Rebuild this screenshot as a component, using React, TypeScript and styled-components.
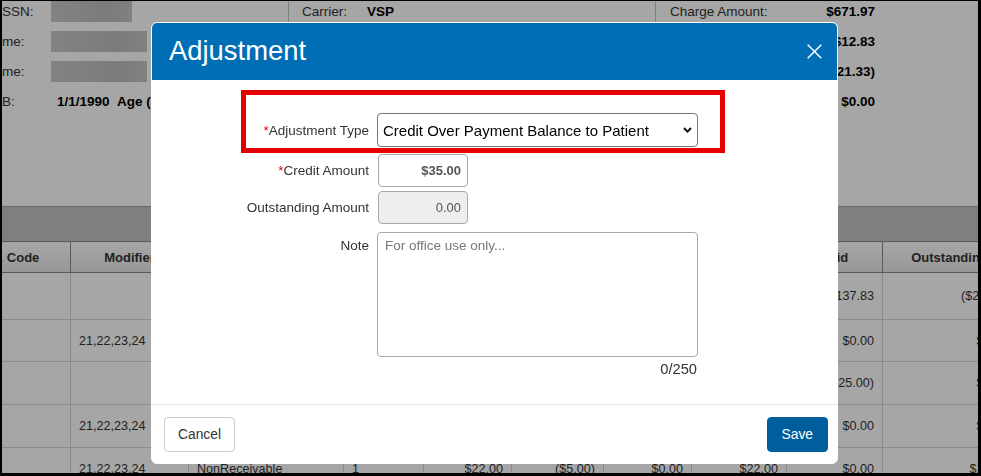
import React from "react";
import styled, { createGlobalStyle } from "styled-components";

const GlobalStyle = createGlobalStyle`
  html, body {
    margin: 0;
    padding: 0;
  }
  body {
    font-family: "Liberation Sans", Arial, sans-serif;
    font-size: 13.5px;
    color: #333;
    background: #000;
    overflow: hidden;
  }
  * {
    box-sizing: border-box;
  }
`;

const Frame = styled.div`
  width: 981px;
  height: 476px;
  border: solid #000;
  border-width: 1px 3px 3px 2px;
  background: #fff;
  overflow: hidden;
`;

/* ---------- page behind the dialog ---------- */

const InfoGrid = styled.div`
  display: grid;
  grid-template-columns: 286px 367px 220px;
  margin-top: -5px;
`;

const InfoCol = styled.div<{ $cols: string; $divider?: boolean; $pad?: number }>`
  display: grid;
  grid-template-columns: ${(p) => p.$cols};
  grid-auto-rows: 30px;
  align-items: center;
  padding-left: ${(p) => p.$pad ?? 0}px;
  border-left: ${(p) => (p.$divider ? "1px solid #c4c4c4" : "none")};
`;

const InfoLabel = styled.span`
  color: #333;
  white-space: nowrap;
`;

const InfoValue = styled.span<{ $right?: boolean }>`
  font-weight: bold;
  color: #000;
  white-space: nowrap;
  text-align: ${(p) => (p.$right ? "right" : "left")};
  padding-left: ${(p) => (p.$right ? 0 : 6)}px;
`;

const Redacted = styled.span<{ $w: number }>`
  display: block;
  width: ${(p) => p.$w}px;
  height: 21px;
  background: linear-gradient(90deg, #c9c9c9 0%, #c2c2c2 45%, #bdbdbd 70%, #c6c6c6 100%);
`;

const Band = styled.div`
  margin-top: 90px;
  height: 35px;
  border-top: 1px solid #a3a3a3;
  background: #c4c4c4;
`;

const Table = styled.table`
  margin-left: -63px;
  border-collapse: collapse;
  table-layout: fixed;
  width: 1077px;
  font-size: 12.6px;
`;

const Th = styled.th`
  height: 31px;
  padding: 0 6px;
  border: 1px solid #8a8a8a;
  background: linear-gradient(#ffffff, #e9e9e9);
  font-size: 13px;
  font-weight: bold;
  color: #333;
  text-align: center;
  white-space: nowrap;
  overflow: hidden;
`;

const Tr = styled.tr<{ $h: number }>`
  height: ${(p) => p.$h}px;
`;

const Td = styled.td<{ $right?: boolean }>`
  padding: 0 8px;
  border: 1px solid #d6d6d6;
  color: #333;
  text-align: ${(p) => (p.$right ? "right" : "left")};
  white-space: nowrap;
  overflow: hidden;
`;

/* ---------- dialog ---------- */

const Backdrop = styled.div`
  position: fixed;
  inset: 0;
  background: rgba(0, 0, 0, 0.35);
  display: flex;
  align-items: flex-start;
  padding: 22px 0 0 151px;
`;

const Modal = styled.div`
  width: 687px;
  background: #fff;
  border: 1px solid #fff;
  border-radius: 6px;
  overflow: hidden;
`;

const Header = styled.div`
  height: 57px;
  background: #006eb4;
  display: flex;
  align-items: center;
  justify-content: space-between;
  padding: 0 15px 0 17px;
`;

const Title = styled.h4`
  margin: 0 0 2px;
  font-size: 27.4px;
  font-weight: normal;
  color: #fff;
`;

const CloseButton = styled.button`
  display: flex;
  padding: 0;
  border: none;
  background: transparent;
  cursor: pointer;
  margin-top: -1px;
`;

const Body = styled.div`
  padding: 33px 0 27px;
`;

const FormRow = styled.div<{ $top?: number; $alignTop?: boolean }>`
  position: relative;
  display: grid;
  grid-template-columns: 217px 1fr;
  column-gap: 8px;
  align-items: ${(p) => (p.$alignTop ? "start" : "center")};
  margin-top: ${(p) => p.$top ?? 0}px;
`;

const Highlight = styled.span`
  position: absolute;
  top: -23px;
  bottom: -6px;
  left: 89px;
  width: 484px;
  border: 5px solid #e60000;
  pointer-events: none;
`;

const Label = styled.label<{ $padTop?: number }>`
  text-align: right;
  color: #333;
  padding-top: ${(p) => p.$padTop ?? 0}px;
`;

const Required = styled.span`
  color: #e00000;
`;

const SelectWrap = styled.div`
  position: relative;
  width: 321px;
  height: 34px;
`;

const Select = styled.select`
  appearance: none;
  width: 100%;
  height: 100%;
  padding: 0 28px 0 5px;
  border: 1px solid #767676;
  border-radius: 4px;
  background: #fff;
  font-family: inherit;
  font-size: 15px;
  color: #000;
`;

const Chevron = styled.svg`
  position: absolute;
  right: 6px;
  top: 14px;
  pointer-events: none;
`;

const AmountInput = styled.input<{ $bold?: boolean }>`
  width: 90px;
  height: 33px;
  margin-left: 1px;
  padding: 0 6px;
  border: 1px solid #a9a9a9;
  border-radius: 4px;
  background: ${(p) => (p.readOnly ? "#eeeeee" : "#fff")};
  font-family: inherit;
  font-size: 13px;
  font-weight: ${(p) => (p.$bold ? "bold" : "normal")};
  color: #555;
  text-align: right;
`;

const NoteArea = styled.textarea`
  display: block;
  width: 321px;
  height: 125px;
  padding: 5px 7px;
  border: 1px solid #a9a9a9;
  border-radius: 4px;
  resize: none;
  font-family: inherit;
  font-size: 13.5px;
  color: #333;

  &::placeholder {
    color: #777;
  }
`;

const Counter = styled.div`
  grid-column: 2;
  width: 320px;
  margin-top: 4px;
  text-align: right;
  font-size: 14.7px;
  line-height: 16px;
  color: #333;
`;

const Footer = styled.div`
  display: flex;
  justify-content: space-between;
  padding: 12px 9px 11px 12px;
  border-top: 1px solid #e5e5e5;
`;

const Button = styled.button<{ $primary?: boolean }>`
  height: 35px;
  padding: 0 ${(p) => (p.$primary ? 14 : 13)}px;
  border: 1px solid ${(p) => (p.$primary ? "#005e9c" : "#cccccc")};
  border-radius: 4px;
  background: ${(p) => (p.$primary ? "#005e9c" : "#fff")};
  color: ${(p) => (p.$primary ? "#fff" : "#333")};
  font-family: inherit;
  font-size: 13.8px;
  cursor: pointer;
`;

const columns = [131, 118, 155, 80, 88, 92, 88, 95, 96, 134];
const headers = ["Proc. Code", "Modifier", "Type", "Units", "Charge", "Adjustment", "Write Off", "Allowed", "Paid", "Outstanding"];

type Line = { h: number; cells: string[] };

const lines: Line[] = [
  { h: 47, cells: ["", "", "Exam", "1", "$150.00", "$0.00", "$0.00", "$150.00", "$137.83", "($21.33)"] },
  { h: 42, cells: ["", "21,22,23,24", "Frame", "1", "$95.00", "$0.00", "$0.00", "$95.00", "$0.00", "$0.00"] },
  { h: 43, cells: ["", "", "Lens", "1", "$60.00", "$0.00", "$0.00", "$60.00", "($25.00)", "$0.00"] },
  { h: 43, cells: ["", "21,22,23,24", "Coating", "1", "$40.00", "$0.00", "$0.00", "$40.00", "$0.00", "$0.00"] },
  { h: 42, cells: ["", "21,22,23,24", "NonReceivable", "1", "$22.00", "($5.00)", "$0.00", "$22.00", "$0.00", "$17.00"] },
];

const leftAligned = [0, 1, 2, 3];

const BackgroundPage = () => (
  <>
    <InfoGrid>
      <InfoCol $cols="49px 1fr">
        <InfoLabel>SSN:</InfoLabel>
        <Redacted $w={81} />
        <InfoLabel>me:</InfoLabel>
        <Redacted $w={96} />
        <InfoLabel>me:</InfoLabel>
        <Redacted $w={96} />
        <InfoLabel>B:</InfoLabel>
        <InfoValue>1/1/1990&nbsp;&nbsp;Age (35)</InfoValue>
      </InfoCol>
      <InfoCol $cols="59px 1fr" $divider $pad={13}>
        <InfoLabel>Carrier:</InfoLabel>
        <InfoValue>VSP</InfoValue>
        <InfoLabel>Plan:</InfoLabel>
        <InfoValue>Choice</InfoValue>
        <InfoLabel>Group:</InfoLabel>
        <InfoValue>12345</InfoValue>
        <InfoLabel>Auth:</InfoLabel>
        <InfoValue>A-0091</InfoValue>
      </InfoCol>
      <InfoCol $cols="140px 65px" $divider $pad={14}>
        <InfoLabel>Charge Amount:</InfoLabel>
        <InfoValue $right>$671.97</InfoValue>
        <InfoLabel>Paid Amount:</InfoLabel>
        <InfoValue $right>$12.83</InfoValue>
        <InfoLabel>Adjustment:</InfoLabel>
        <InfoValue $right>($21.33)</InfoValue>
        <InfoLabel>Balance:</InfoLabel>
        <InfoValue $right>$0.00</InfoValue>
      </InfoCol>
    </InfoGrid>
    <Band />
    <Table>
      <colgroup>
        {columns.map((w, i) => (
          <col key={i} style={{ width: w }} />
        ))}
      </colgroup>
      <thead>
        <tr>
          {headers.map((h) => (
            <Th key={h}>{h}</Th>
          ))}
        </tr>
      </thead>
      <tbody>
        {lines.map((line, r) => (
          <Tr key={r} $h={line.h}>
            {line.cells.map((c, i) => (
              <Td key={i} $right={!leftAligned.includes(i)}>
                {c}
              </Td>
            ))}
          </Tr>
        ))}
      </tbody>
    </Table>
  </>
);

const AdjustmentDialog = () => (
  <Backdrop>
    <Modal>
      <Header>
        <Title>Adjustment</Title>
        <CloseButton aria-label="Close">
          <svg width="15" height="15" viewBox="0 0 15 15">
            <path d="M0.7 0.7 L14.3 14.3 M14.3 0.7 L0.7 14.3" stroke="#fff" strokeWidth="1.5" fill="none" />
          </svg>
        </CloseButton>
      </Header>
      <Body>
        <FormRow>
          <Highlight />
          <Label>
            <Required>*</Required>Adjustment Type
          </Label>
          <SelectWrap>
            <Select defaultValue="credit">
              <option value="credit">Credit Over Payment Balance to Patient</option>
              <option value="debit">Debit Balance to Patient</option>
            </Select>
            <Chevron width="9" height="6" viewBox="0 0 9 6">
              <path d="M1 1 L4.5 4.6 L8 1" stroke="#111" strokeWidth="2" fill="none" />
            </Chevron>
          </SelectWrap>
        </FormRow>
        <FormRow $top={7}>
          <Label>
            <Required>*</Required>Credit Amount
          </Label>
          <AmountInput $bold defaultValue="$35.00" />
        </FormRow>
        <FormRow $top={4}>
          <Label>Outstanding Amount</Label>
          <AmountInput readOnly value="0.00" />
        </FormRow>
        <FormRow $top={8} $alignTop>
          <Label $padTop={6}>Note</Label>
          <NoteArea placeholder="For office use only..." maxLength={250} />
          <Counter>0/250</Counter>
        </FormRow>
      </Body>
      <Footer>
        <Button>Cancel</Button>
        <Button $primary>Save</Button>
      </Footer>
    </Modal>
  </Backdrop>
);

export default function App() {
  return (
    <>
      <GlobalStyle />
      <Frame>
        <BackgroundPage />
      </Frame>
      <AdjustmentDialog />
    </>
  );
}
